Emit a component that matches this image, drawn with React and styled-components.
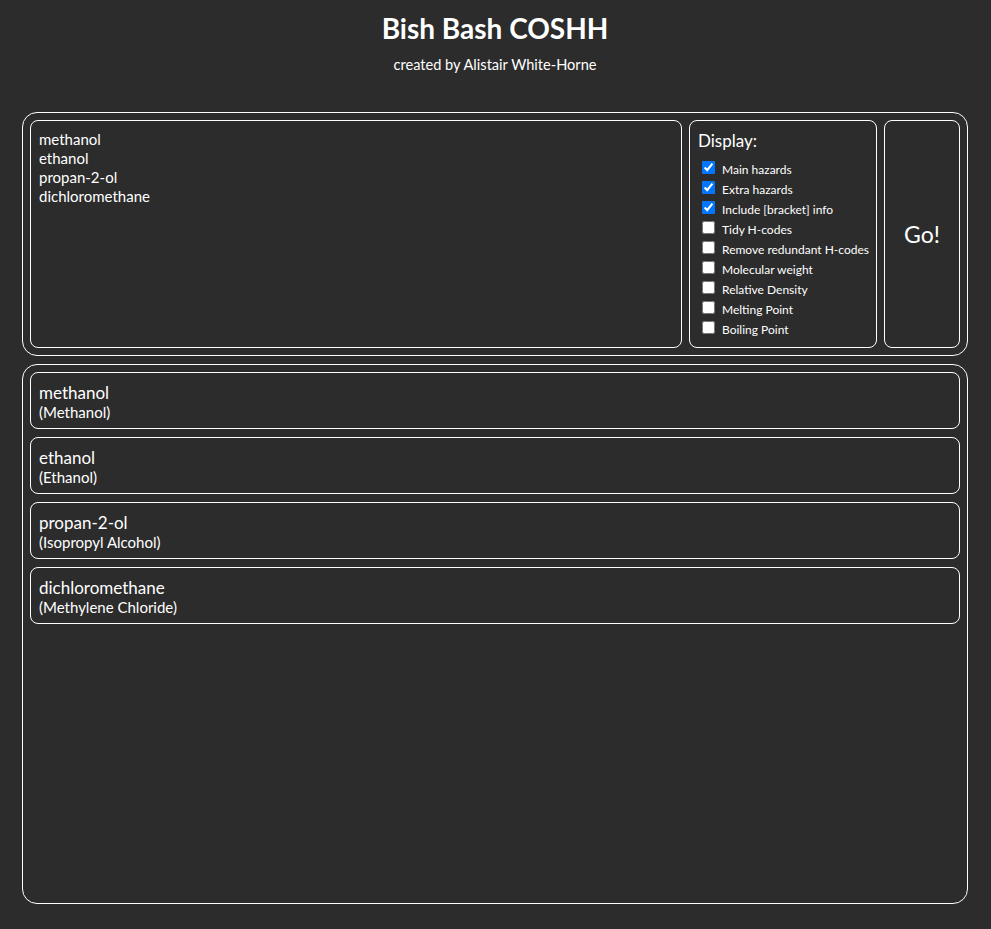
import React, { useState } from 'react';
import styled, { createGlobalStyle } from 'styled-components';

const GlobalStyle = createGlobalStyle`
  html, body {
    margin: 0;
    padding: 0;
    background: #2c2c2c;
    color: #ffffff;
    font-family: Lato, "Open Sans", sans-serif;
  }
`;

const Page = styled.div`
  min-height: 929px;
  box-sizing: border-box;
  padding: 12px 23px 26px 22px;
  display: flex;
  flex-direction: column;
`;

const Header = styled.header`
  text-align: center;
  margin-bottom: 38px;
`;

const Title = styled.h1`
  margin: 0;
  font-size: 28px;
  font-weight: 700;
  line-height: 32px;
`;

const Subtitle = styled.p`
  margin: 12px 0 0;
  font-size: 14.6px;
  line-height: 18px;
`;

const Panel = styled.section`
  border: 1px solid #ffffff;
  border-radius: 15px;
  padding: 7px;
  display: flex;
  gap: ${(p) => (p.$column ? 8 : 7)}px;
  flex-direction: ${(p) => (p.$column ? 'column' : 'row')};
  height: ${(p) => p.$height}px;
  box-sizing: border-box;
  & + & {
    margin-top: 8px;
  }
`;

const Box = styled.div`
  border: 1px solid #ffffff;
  border-radius: 8px;
  box-sizing: border-box;
`;

const Input = styled.textarea`
  flex: 1;
  background: transparent;
  color: #ffffff;
  border: 1px solid #ffffff;
  border-radius: 8px;
  padding: 9px 8px;
  font-family: inherit;
  font-size: 15px;
  line-height: 19px;
  resize: none;
  outline: none;
`;

const Options = styled(Box)`
  width: 188px;
  flex-shrink: 0;
  padding: 10px 8px 9px 8px;
`;

const OptionsTitle = styled.div`
  font-size: 17px;
  line-height: 20px;
  margin-bottom: 8px;
`;

const Option = styled.label`
  display: flex;
  align-items: center;
  height: 20px;
  font-size: 12px;
  white-space: nowrap;
  padding-left: 4px;
  input {
    margin: 0 7px 4px 0;
    width: 13px;
    height: 13px;
  }
`;

const GoButton = styled.button`
  width: 76px;
  flex-shrink: 0;
  background: transparent;
  color: #ffffff;
  border: 1px solid #ffffff;
  border-radius: 8px;
  font-family: inherit;
  font-size: 23px;
  cursor: pointer;
`;

const Card = styled(Box)`
  height: 57px;
  flex-shrink: 0;
  padding: 10px 8px;
`;

const Name = styled.div`
  font-size: 17px;
  line-height: 20px;
`;

const Common = styled.div`
  font-size: 15px;
  line-height: 19px;
`;

const options = [
  ['Main hazards', true],
  ['Extra hazards', true],
  ['Include [bracket] info', true],
  ['Tidy H-codes', false],
  ['Remove redundant H-codes', false],
  ['Molecular weight', false],
  ['Relative Density', false],
  ['Melting Point', false],
  ['Boiling Point', false],
];

const results = [
  ['methanol', 'Methanol'],
  ['ethanol', 'Ethanol'],
  ['propan-2-ol', 'Isopropyl Alcohol'],
  ['dichloromethane', 'Methylene Chloride'],
];

export default function App() {
  const [text, setText] = useState('methanol\nethanol\npropan-2-ol\ndichloromethane');
  const [checked, setChecked] = useState(options.map((o) => o[1]));

  return (
    <Page>
      <GlobalStyle />
      <Header>
        <Title>Bish Bash COSHH</Title>
        <Subtitle>created by Alistair White-Horne</Subtitle>
      </Header>
      <Panel $height={244}>
        <Input value={text} onChange={(e) => setText(e.target.value)} spellCheck={false} />
        <Options>
          <OptionsTitle>Display:</OptionsTitle>
          {options.map(([label], i) => (
            <Option key={label}>
              <input
                type="checkbox"
                checked={checked[i]}
                onChange={() => setChecked(checked.map((c, j) => (j === i ? !c : c)))}
              />
              {label}
            </Option>
          ))}
        </Options>
        <GoButton>Go!</GoButton>
      </Panel>
      <Panel $column $height={540}>
        {results.map(([name, common]) => (
          <Card key={name}>
            <Name>{name}</Name>
            <Common>({common})</Common>
          </Card>
        ))}
      </Panel>
    </Page>
  );
}
